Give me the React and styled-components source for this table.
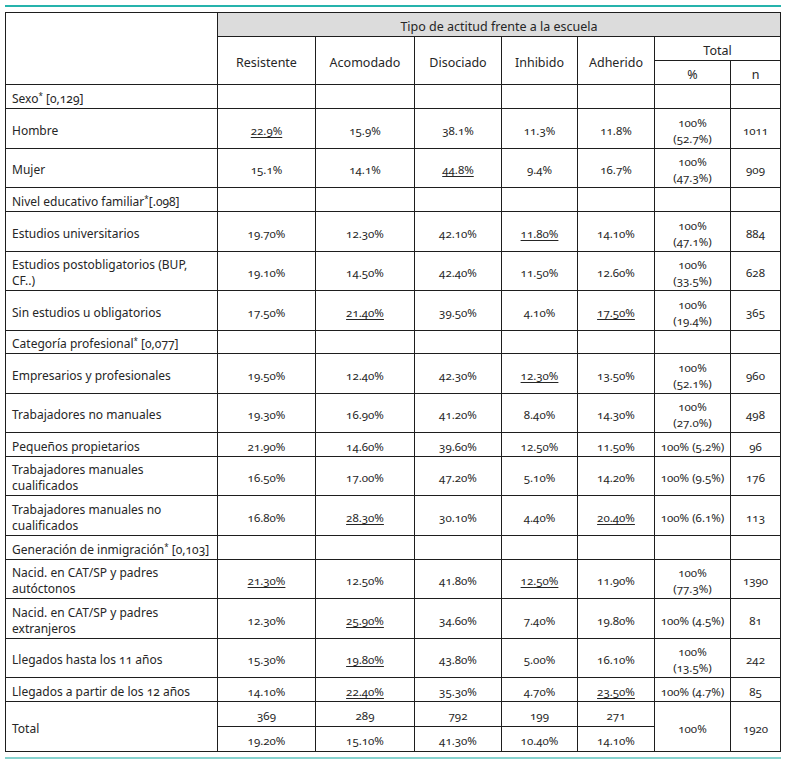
import React from 'react';
import styled, { createGlobalStyle } from 'styled-components';

const GlobalStyle = createGlobalStyle`
  body {
    margin: 0;
    background: #ffffff;
    font-family: "Noto Sans", "Open Sans", sans-serif;
    color: #262626;
  }
`;

const Page = styled.div`
  width: 776px;
  padding: 5px 0 0 5px;
`;

const Rule = styled.div`
  height: 2px;
  width: 776px;
  background: ${({ $light }) => ($light ? '#86d2ce' : '#26b3ac')};
`;

const Table = styled.table`
  border-collapse: collapse;
  table-layout: fixed;
  width: 775px;
  margin: 5px 0 5px;
  font-variant-numeric: oldstyle-nums;
`;

const Row = styled.tr`
  height: ${({ $h }) => $h}px;
`;

const HeadCell = styled.th`
  border: 1px solid #1e1e1e;
  padding: 3px 4px 0;
  font-weight: 400;
  font-size: 12.5px;
  text-align: center;
  vertical-align: middle;
  background: ${({ $shade }) => ($shade ? '#dcdcdc' : '#ffffff')};
`;

const LabelCell = styled.td`
  border: 1px solid #1e1e1e;
  padding: 4px 6px 0;
  font-size: 12px;
  line-height: 16px;
  text-align: left;
  vertical-align: middle;
  white-space: nowrap;
`;

const NumCell = styled.td`
  border: 1px solid #1e1e1e;
  padding: 4px 3px 0;
  font-size: 11.5px;
  line-height: 16px;
  text-align: center;
  vertical-align: middle;
  white-space: nowrap;
`;

const Marked = styled.span`
  text-decoration: underline;
  text-underline-offset: 2px;
`;

const Star = styled.sup`
  font-size: 8px;
  vertical-align: 4px;
  line-height: 0;
`;

const sections = [
  {
    title: 'Sexo',
    stat: ' [0,129]',
    h: 24,
    rows: [
      { label: ['Hombre'], vals: ['22.9%', '15.9%', '38.1%', '11.3%', '11.8%'], hi: [0], pct: ['100%', '(52.7%)'], n: '1011', h: 40 },
      { label: ['Mujer'], vals: ['15.1%', '14.1%', '44.8%', '9.4%', '16.7%'], hi: [2], pct: ['100%', '(47.3%)'], n: '909', h: 39 }
    ]
  },
  {
    title: 'Nivel educativo familiar',
    stat: '[.098]',
    h: 24,
    rows: [
      { label: ['Estudios universitarios'], vals: ['19.70%', '12.30%', '42.10%', '11.80%', '14.10%'], hi: [3], pct: ['100%', '(47.1%)'], n: '884', h: 40 },
      { label: ['Estudios postobligatorios (BUP,', 'CF..)'], vals: ['19.10%', '14.50%', '42.40%', '11.50%', '12.60%'], hi: [], pct: ['100%', '(33.5%)'], n: '628', h: 39 },
      { label: ['Sin estudios u obligatorios'], vals: ['17.50%', '21.40%', '39.50%', '4.10%', '17.50%'], hi: [1, 4], pct: ['100%', '(19.4%)'], n: '365', h: 40 }
    ]
  },
  {
    title: 'Categoría profesional',
    stat: ' [0,077]',
    h: 23,
    rows: [
      { label: ['Empresarios y profesionales'], vals: ['19.50%', '12.40%', '42.30%', '12.30%', '13.50%'], hi: [3], pct: ['100%', '(52.1%)'], n: '960', h: 40 },
      { label: ['Trabajadores no manuales'], vals: ['19.30%', '16.90%', '41.20%', '8.40%', '14.30%'], hi: [], pct: ['100%', '(27.0%)'], n: '498', h: 39 },
      { label: ['Pequeños propietarios'], vals: ['21.90%', '14.60%', '39.60%', '12.50%', '11.50%'], hi: [], pct: ['100% (5.2%)'], n: '96', h: 24 },
      { label: ['Trabajadores manuales', 'cualificados'], vals: ['16.50%', '17.00%', '47.20%', '5.10%', '14.20%'], hi: [], pct: ['100% (9.5%)'], n: '176', h: 39 },
      { label: ['Trabajadores manuales no', 'cualificados'], vals: ['16.80%', '28.30%', '30.10%', '4.40%', '20.40%'], hi: [1, 4], pct: ['100% (6.1%)'], n: '113', h: 40 }
    ]
  },
  {
    title: 'Generación de inmigración',
    stat: ' [0,103]',
    h: 24,
    rows: [
      { label: ['Nacid. en CAT/SP y padres', 'autóctonos'], vals: ['21.30%', '12.50%', '41.80%', '12.50%', '11.90%'], hi: [0, 3], pct: ['100%', '(77.3%)'], n: '1390', h: 39 },
      { label: ['Nacid. en CAT/SP y padres', 'extranjeros'], vals: ['12.30%', '25.90%', '34.60%', '7.40%', '19.80%'], hi: [1], pct: ['100% (4.5%)'], n: '81', h: 40 },
      { label: ['Llegados hasta los 11 años'], vals: ['15.30%', '19.80%', '43.80%', '5.00%', '16.10%'], hi: [1], pct: ['100%', '(13.5%)'], n: '242', h: 39 },
      { label: ['Llegados a partir de los 12 años'], vals: ['14.10%', '22.40%', '35.30%', '4.70%', '23.50%'], hi: [1, 4], pct: ['100% (4.7%)'], n: '85', h: 24 }
    ]
  }
];

const attitudes = ['Resistente', 'Acomodado', 'Disociado', 'Inhibido', 'Adherido'];
const totals = [['369', '19.20%'], ['289', '15.10%'], ['792', '41.30%'], ['199', '10.40%'], ['271', '14.10%']];
const widths = [212, 98, 99, 87, 76, 77, 76, 50];

const Lines = ({ parts }) =>
  parts.map((part, i) => (
    <React.Fragment key={i}>
      {i > 0 && <br />}
      {part}
    </React.Fragment>
  ));

const DataRow = ({ row }) => (
  <Row $h={row.h}>
    <LabelCell>
      <Lines parts={row.label} />
    </LabelCell>
    {row.vals.map((v, i) => (
      <NumCell key={i}>{row.hi.includes(i) ? <Marked>{v}</Marked> : v}</NumCell>
    ))}
    <NumCell>
      <Lines parts={row.pct} />
    </NumCell>
    <NumCell>{row.n}</NumCell>
  </Row>
);

const App = () => (
  <Page>
    <GlobalStyle />
    <Rule />
    <Table>
      <colgroup>
        {widths.map((w, i) => (
          <col key={i} style={{ width: w }} />
        ))}
      </colgroup>
      <thead>
        <Row $h={24}>
          <HeadCell rowSpan={3} />
          <HeadCell colSpan={7} $shade>Tipo de actitud frente a la escuela</HeadCell>
        </Row>
        <Row $h={24}>
          {attitudes.map((a) => (
            <HeadCell key={a} rowSpan={2}>{a}</HeadCell>
          ))}
          <HeadCell colSpan={2}>Total</HeadCell>
        </Row>
        <Row $h={24}>
          <HeadCell>%</HeadCell>
          <HeadCell>n</HeadCell>
        </Row>
      </thead>
      <tbody>
        {sections.map((s) => (
          <React.Fragment key={s.title}>
            <Row $h={s.h}>
              <LabelCell>
                {s.title}
                <Star>*</Star>
                {s.stat}
              </LabelCell>
              {widths.slice(1).map((_, i) => (
                <NumCell key={i} />
              ))}
            </Row>
            {s.rows.map((r) => (
              <DataRow key={r.label.join(' ')} row={r} />
            ))}
          </React.Fragment>
        ))}
        <Row $h={25}>
          <LabelCell rowSpan={2}>Total</LabelCell>
          {totals.map((t, i) => (
            <NumCell key={i}>{t[0]}</NumCell>
          ))}
          <NumCell rowSpan={2}>100%</NumCell>
          <NumCell rowSpan={2}>1920</NumCell>
        </Row>
        <Row $h={25}>
          {totals.map((t, i) => (
            <NumCell key={i}>{t[1]}</NumCell>
          ))}
        </Row>
      </tbody>
    </Table>
    <Rule $light />
  </Page>
);

export default App;
